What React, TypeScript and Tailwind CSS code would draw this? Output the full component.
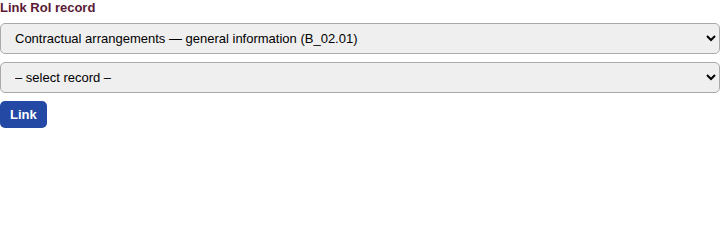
import React from 'react';

const App: React.FC = () => {
  return (
    <div className="w-[720px] bg-white font-['Liberation_Sans',Arial,sans-serif]">
      <div className="text-[13px] font-bold leading-[15px] text-[#5a1a35]">Link RoI record</div>
      <div className="mt-2 flex flex-col gap-2">
        <select
          className="h-[31px] w-full rounded-[5px] border border-[#aaaaaa] bg-[#efefef] pl-[10px] pr-[14px] text-[13px] text-black"
          defaultValue="b0201"
        >
          <option value="b0201">Contractual arrangements — general information (B_02.01)</option>
        </select>
        <select
          className="h-[31px] w-full rounded-[5px] border border-[#aaaaaa] bg-[#efefef] pl-[10px] pr-[14px] text-[13px] text-black"
          defaultValue=""
        >
          <option value="">– select record –</option>
        </select>
      </div>
      <button className="mt-2 h-[27px] rounded-[5px] bg-[#2349a4] px-[10px] text-[13px] font-bold text-white">
        Link
      </button>
    </div>
  );
};

export default App;
